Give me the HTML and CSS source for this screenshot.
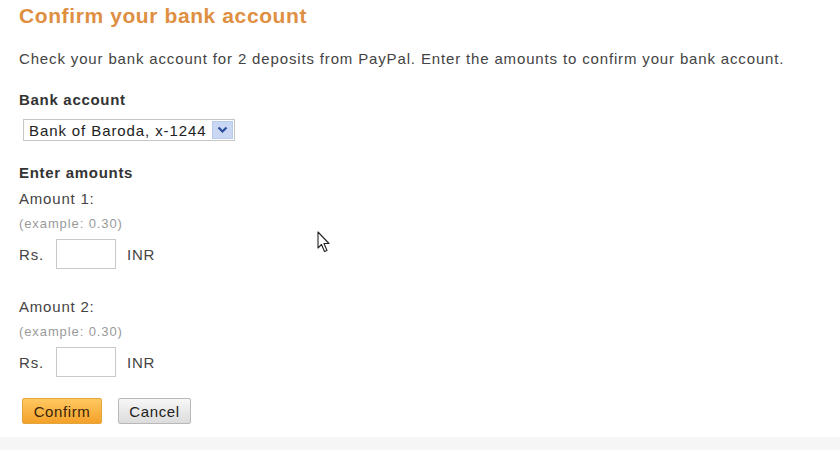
FILE: index.html
```html
<!DOCTYPE html>
<html>
<head>
    <title>Confirm your bank account</title>
    <link rel="stylesheet" href="styles.css">
</head>
<body>
    <div class="page">
        <h1>Confirm your bank account</h1>
        <p class="intro">Check your bank account for 2 deposits from PayPal. Enter the amounts to confirm your bank account.</p>

        <div class="field">
            <label class="title" for="bank">Bank account</label>
            <div class="select" id="bank">
                <span class="select-text">Bank of Baroda, x-1244</span>
                <span class="select-arrow">
                    <svg width="11" height="8" viewBox="0 0 11 8"><path d="M1.5 1.5 L5.5 5.5 L9.5 1.5" fill="none" stroke="#2a4d9c" stroke-width="2.2"/></svg>
                </span>
            </div>
        </div>

        <div class="field amounts">
            <div class="title">Enter amounts</div>
            <div class="amount">
                <div class="amount-label">Amount 1:</div>
                <div class="hint">(example: 0.30)</div>
                <div class="money">
                    <span class="cur">Rs.</span>
                    <input type="text" class="box">
                    <span>INR</span>
                </div>
            </div>
            <div class="amount">
                <div class="amount-label">Amount 2:</div>
                <div class="hint">(example: 0.30)</div>
                <div class="money">
                    <span class="cur">Rs.</span>
                    <input type="text" class="box">
                    <span>INR</span>
                </div>
            </div>
        </div>

        <div class="actions">
            <button class="btn primary">Confirm</button>
            <button class="btn">Cancel</button>
        </div>
    </div>
    <div class="footer"></div>

    <svg class="cursor" width="14" height="22" viewBox="0 0 14 22">
        <path d="M1 1 L1 17 L4.5 13.5 L7.5 20.5 L10 19.5 L7 12.5 L12 12.5 Z" fill="#fff" stroke="#222" stroke-width="1.1" stroke-linejoin="round"/>
    </svg>
</body>
</html>
```

FILE: styles.css
```css
body {
    margin: 0;
    font-family: Arial, "Liberation Sans", sans-serif;
    color: #444;
    background-color: #fff;
    font-size: 15px;
    letter-spacing: 0.8px;
}

.page {
    padding: 3px 0 0 20px;
    height: 437px;
    box-sizing: border-box;
}

h1 {
    margin: 0 0 0 -1px;
    font-size: 21px;
    letter-spacing: 0.6px;
    color: #de8f42;
    line-height: 26px;
}

.intro {
    margin: 21px 0 0 -1px;
    line-height: 18px;
    letter-spacing: 0.85px;
    color: #444;
}

.field {
    margin-top: 23px;
}

.title {
    display: block;
    margin-left: -1px;
    font-weight: bold;
    color: #333;
    line-height: 18px;
    letter-spacing: 0.7px;
}

.select {
    display: flex;
    align-items: center;
    width: 212px;
    height: 22px;
    margin: 10px 0 0 3px;
    border: 1px solid #c6c6c6;
    box-sizing: border-box;
    background-color: #fff;
}

.select-text {
    flex: 1;
    padding-left: 5px;
    color: #222;
    letter-spacing: 0.9px;
}

.select-arrow {
    display: flex;
    align-items: center;
    justify-content: center;
    width: 21px;
    height: 18px;
    margin-right: 1px;
    background-color: #c9d7f3;
    border: 1px solid #b8c9ee;
    box-sizing: border-box;
}

.amounts {
    margin-top: 23px;
}

.amount-label {
    margin: 8px 0 0 -1px;
    line-height: 18px;
}

.hint {
    margin: 8px 0 0 -1px;
    font-size: 13px;
    line-height: 16px;
    letter-spacing: 0.9px;
    color: #9a9a9a;
}

.money {
    display: flex;
    align-items: center;
    margin: 7px 0 0 -1px;
}

.cur {
    width: 37px;
}

.box {
    width: 60px;
    height: 30px;
    margin: 0 11px 0 0;
    box-sizing: border-box;
    border: 1px solid #c9c9c9;
    font-size: 14px;
}

.amount + .amount {
    margin-top: 29px;
}

.actions {
    display: flex;
    gap: 16px;
    margin-top: 21px;
    margin-left: 2px;
}

.btn {
    font-family: Arial, "Liberation Sans", sans-serif;
    font-size: 15px;
    letter-spacing: 0.6px;
    width: 73px;
    height: 26px;
    padding: 0;
    border: 1px solid #b8b8b8;
    border-radius: 2px;
    background: linear-gradient(#f7f7f7, #dcdcdc);
    color: #222;
}

.primary {
    width: 80px;
    border-color: #e3a53d;
    background: linear-gradient(#ffc860, #f4a12a);
    color: #3a2506;
}

.footer {
    height: 13px;
    background-color: #f6f6f6;
}

.cursor {
    position: absolute;
    left: 317px;
    top: 231px;
}
```
